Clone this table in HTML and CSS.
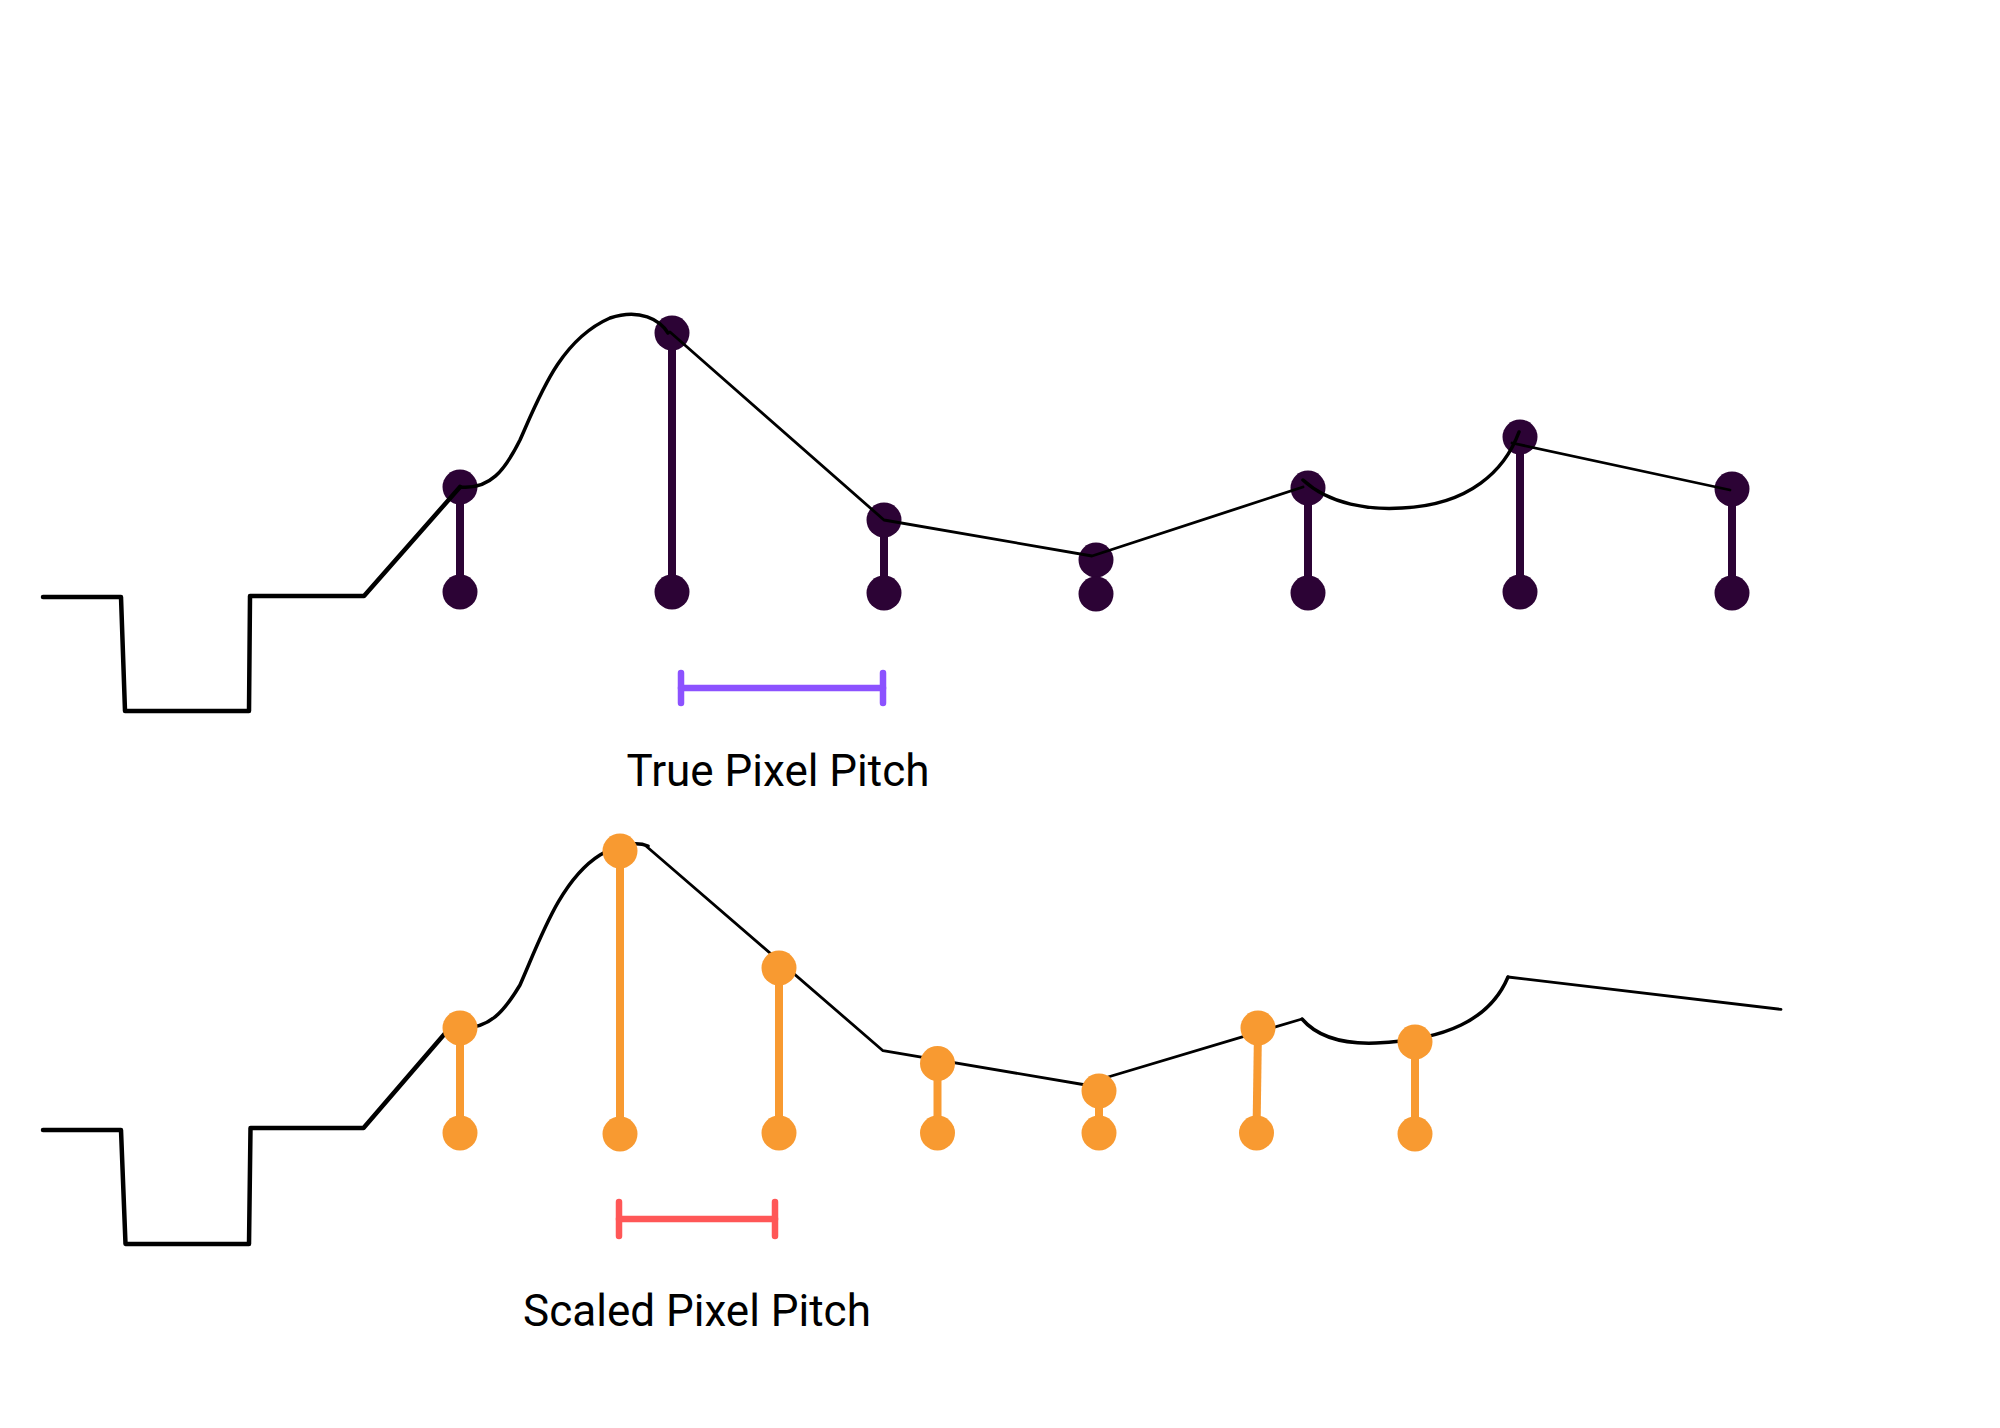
FILE: index.html
```html
<!DOCTYPE html>
<html lang="en">
<head>
<meta charset="utf-8">
<title>True vs Scaled Pixel Pitch</title>
<link rel="stylesheet" href="styles.css">
</head>
<body>
<main class="canvas">
<svg class="diagram" width="2000" height="1428" viewBox="0 0 2000 1428" xmlns="http://www.w3.org/2000/svg">
  <!-- TOP: true pixel pitch -->
  <g class="samples-true">
    <line class="stem" x1="460" y1="487" x2="460" y2="592"/>
    <line class="stem" x1="672" y1="333" x2="672" y2="592"/>
    <line class="stem" x1="884" y1="520" x2="884" y2="593"/>
    <line class="stem" x1="1096" y1="560" x2="1096" y2="594"/>
    <line class="stem" x1="1308" y1="488" x2="1308" y2="593"/>
    <line class="stem" x1="1520" y1="437" x2="1520" y2="592"/>
    <line class="stem" x1="1732" y1="489" x2="1732" y2="593"/>
    <circle cx="460" cy="487" r="17.5"/><circle cx="460" cy="592" r="17.5"/>
    <circle cx="672" cy="333" r="17.5"/><circle cx="672" cy="592" r="17.5"/>
    <circle cx="884" cy="520" r="17.5"/><circle cx="884" cy="593" r="17.5"/>
    <circle cx="1096" cy="560" r="17.5"/><circle cx="1096" cy="594" r="17.5"/>
    <circle cx="1308" cy="488" r="17.5"/><circle cx="1308" cy="593" r="17.5"/>
    <circle cx="1520" cy="437" r="17.5"/><circle cx="1520" cy="592" r="17.5"/>
    <circle cx="1732" cy="489" r="17.5"/><circle cx="1732" cy="593" r="17.5"/>
  </g>
  <g class="signal">
    <path class="step" d="M43 597 L121 597 L125 711 L249 711 L250 596 L364 596 L460 487"/>
    <path class="curve" d="M460 487 C490 490 505 470 520 440 C540 395 560 340 610 318 C640 308 660 320 668 333"/>
    <path class="thin" d="M670 332 L884 520 L1092 556 L1303 487"/>
    <path class="curve" d="M1303 480 C1330 505 1370 510 1402 508 C1470 505 1505 470 1519 432"/>
    <path class="thin" d="M1512 443 L1730 490"/>
  </g>
  <g class="bracket bracket-true">
    <line x1="681" y1="688" x2="883" y2="688"/>
    <line x1="681" y1="673" x2="681" y2="703"/>
    <line x1="883" y1="673" x2="883" y2="703"/>
  </g>
  <text class="label" x="778" y="786">True Pixel Pitch</text>

  <!-- BOTTOM: scaled pixel pitch -->
  <g class="signal">
    <path class="step" d="M43 1130 L121 1130 L125.5 1244 L249 1244 L250.5 1128 L363.5 1128 L460 1016"/>
    <path class="curve" d="M458 1028 C490 1030 505 1010 520 985 C540 940 560 880 600 855 C620 843 638 842 648 846"/>
    <path class="thin" d="M646 846 L883 1050.7 L1083 1084.5 L1302 1019"/>
    <path class="curve" d="M1302 1019 C1320 1040 1350 1044 1376 1043 C1445 1040 1490 1020 1508 977"/>
    <path class="thin" d="M1508 977 L1781 1009.4"/>
  </g>
  <g class="samples-scaled">
    <line class="stem" x1="460" y1="1028" x2="460" y2="1133"/>
    <line class="stem" x1="620" y1="851" x2="620" y2="1134"/>
    <line class="stem" x1="779" y1="968" x2="779" y2="1133"/>
    <line class="stem" x1="937.5" y1="1063.5" x2="937.5" y2="1133"/>
    <line class="stem" x1="1099" y1="1091" x2="1099" y2="1133"/>
    <line class="stem" x1="1258" y1="1028" x2="1256.5" y2="1133"/>
    <line class="stem" x1="1415" y1="1042" x2="1415" y2="1134"/>
    <circle cx="460" cy="1028" r="17.5"/><circle cx="460" cy="1133" r="17.5"/>
    <circle cx="620" cy="851" r="17.5"/><circle cx="620" cy="1134" r="17.5"/>
    <circle cx="779" cy="968" r="17.5"/><circle cx="779" cy="1133" r="17.5"/>
    <circle cx="937.5" cy="1063.5" r="17.5"/><circle cx="937.5" cy="1133" r="17.5"/>
    <circle cx="1099" cy="1091" r="17.5"/><circle cx="1099" cy="1133" r="17.5"/>
    <circle cx="1258" cy="1028" r="17.5"/><circle cx="1256.5" cy="1133" r="17.5"/>
    <circle cx="1415" cy="1042" r="17.5"/><circle cx="1415" cy="1134" r="17.5"/>
  </g>
  <g class="bracket bracket-scaled">
    <line x1="619" y1="1219" x2="775" y2="1219"/>
    <line x1="619" y1="1202" x2="619" y2="1236"/>
    <line x1="775" y1="1202" x2="775" y2="1236"/>
  </g>
  <text class="label" x="697" y="1325.5">Scaled Pixel Pitch</text>
</svg>
</main>
</body>
</html>
```

FILE: styles.css
```css
html, body {
  margin: 0;
  padding: 0;
  background: #ffffff;
}

.canvas {
  width: 2000px;
  height: 1428px;
  overflow: hidden;
}

.diagram {
  display: block;
}

.samples-true circle {
  fill: #2c0335;
}
.samples-true .stem {
  stroke: #2c0335;
  stroke-width: 8;
}

.samples-scaled circle {
  fill: #f89a31;
}
.samples-scaled .stem {
  stroke: #f89a31;
  stroke-width: 8;
}

.signal path {
  fill: none;
  stroke: #000000;
  stroke-linejoin: round;
}
.signal .step {
  stroke-width: 4.5;
  stroke-linecap: round;
}
.signal .curve {
  stroke-width: 3.5;
  stroke-linecap: round;
}
.signal .thin {
  stroke-width: 2.8;
  stroke-linecap: round;
}

.bracket line {
  stroke-width: 6.5;
  stroke-linecap: round;
}
.bracket-true line {
  stroke: #8c52ff;
}
.bracket-scaled line {
  stroke: #ff5757;
}

.label {
  font-family: Roboto, "Liberation Sans", sans-serif;
  font-size: 44px;
  fill: #000000;
  text-anchor: middle;
}
```
